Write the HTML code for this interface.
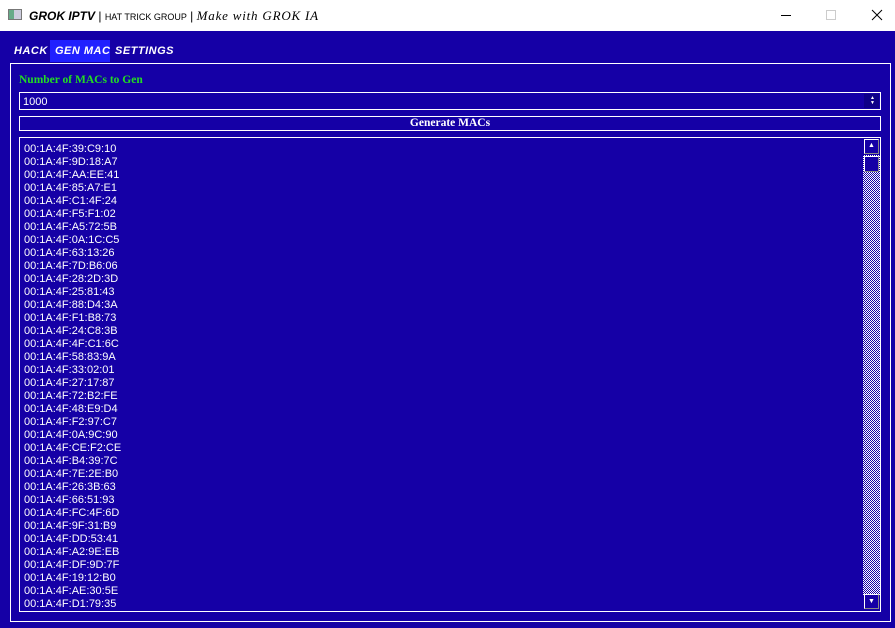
<!DOCTYPE html>
<html><head><meta charset="utf-8"><style>
*{margin:0;padding:0;box-sizing:border-box}
body{width:895px;height:628px;background:#1500a6;position:relative;overflow:hidden;font-family:"Liberation Sans",Tahoma,sans-serif}
.title{position:absolute;left:0;top:0;width:895px;height:31px;background:#fff;color:#000}
.abs{position:absolute}
.tab{position:absolute;top:45px;color:#fff;font:italic bold 11px "Liberation Sans",sans-serif;letter-spacing:0.5px}
.box{position:absolute;border:1px solid #fff}
.list{position:absolute;left:24px;top:143px;color:#fff;font-size:11px;line-height:13px;white-space:pre}
.checker{background-color:#1500a6;background-image:repeating-conic-gradient(#fff 0 25%,#1500a6 0 50%);background-size:2px 2px}
</style></head><body>
<div class="title">
 <div class="abs" style="left:8px;top:9px;width:14px;height:11px;border:1px solid #777;background:linear-gradient(90deg,#6a8 0 40%,#ccd 40%)"></div>
 <div class="abs" style="left:29px;top:8px;font:italic bold 12px 'Liberation Sans',sans-serif;white-space:nowrap">GROK IPTV <span style="font-style:normal;font-weight:normal">|</span> <span style="font:normal 9px 'Liberation Sans',sans-serif">HAT TRICK GROUP</span> <span style="font-style:normal;font-weight:normal">|</span> <span style="font:italic 13px 'Liberation Serif',serif;letter-spacing:0.8px">Make with GROK IA</span></div>
 <div class="abs" style="left:781px;top:15px;width:10px;height:1px;background:#000"></div>
 <div class="abs" style="left:826px;top:10px;width:10px;height:10px;border:1px solid #ccc"></div>
 <svg class="abs" style="left:871px;top:9px" width="12" height="12"><path d="M1 1L11 11M11 1L1 11" stroke="#000" stroke-width="1"/></svg>
</div>
<div class="abs" style="left:50px;top:40px;width:60px;height:22px;background:#2020ff"></div>
<div class="tab" style="left:14px">HACK</div>
<div class="tab" style="left:55px">GEN MAC</div>
<div class="tab" style="left:115px">SETTINGS</div>
<div class="box" style="left:10px;top:63px;width:881px;height:559px"></div>
<div class="abs" style="left:19px;top:74px;color:#22dd22;font:bold 11.5px 'Liberation Serif',serif">Number of MACs to Gen</div>
<div class="box" style="left:19px;top:92px;width:862px;height:18px"></div>
<div class="abs" style="left:23px;top:96px;color:#fff;font-size:11px">1000</div>
<div class="abs" style="left:864px;top:94px;width:15px;height:14px;background:#0e0088"></div>
<div class="abs" style="left:870px;top:96px;color:#fff;font-size:5px;line-height:5px">▲<br>▼</div>
<div class="box" style="left:19px;top:116px;width:862px;height:15px"></div>
<div class="abs" style="left:19px;top:117px;width:862px;text-align:center;color:#fff;font:bold 11.5px 'Liberation Serif',serif">Generate MACs</div>
<div class="box" style="left:19px;top:137px;width:862px;height:475px"></div>
<div class="abs checker" style="left:863px;top:155px;width:17px;height:440px"></div>
<div class="abs" style="left:864px;top:139px;width:15px;height:15px;border:1px solid #fff;border-right-color:#888;border-bottom-color:#888;background:#1500a6;color:#fff;font-size:7px;text-align:center;line-height:12px">▲</div>
<div class="abs" style="left:864px;top:156px;width:15px;height:16px;border:1px solid #fff;border-right-color:#888;border-bottom-color:#888;background:#1500a6"></div>
<div class="abs" style="left:864px;top:594px;width:15px;height:15px;border:1px solid #fff;border-right-color:#888;border-bottom-color:#888;background:#1500a6;color:#fff;font-size:7px;text-align:center;line-height:13px">▼</div>
<div class="list">00:1A:4F:39:C9:10
00:1A:4F:9D:18:A7
00:1A:4F:AA:EE:41
00:1A:4F:85:A7:E1
00:1A:4F:C1:4F:24
00:1A:4F:F5:F1:02
00:1A:4F:A5:72:5B
00:1A:4F:0A:1C:C5
00:1A:4F:63:13:26
00:1A:4F:7D:B6:06
00:1A:4F:28:2D:3D
00:1A:4F:25:81:43
00:1A:4F:88:D4:3A
00:1A:4F:F1:B8:73
00:1A:4F:24:C8:3B
00:1A:4F:4F:C1:6C
00:1A:4F:58:83:9A
00:1A:4F:33:02:01
00:1A:4F:27:17:87
00:1A:4F:72:B2:FE
00:1A:4F:48:E9:D4
00:1A:4F:F2:97:C7
00:1A:4F:0A:9C:90
00:1A:4F:CE:F2:CE
00:1A:4F:B4:39:7C
00:1A:4F:7E:2E:B0
00:1A:4F:26:3B:63
00:1A:4F:66:51:93
00:1A:4F:FC:4F:6D
00:1A:4F:9F:31:B9
00:1A:4F:DD:53:41
00:1A:4F:A2:9E:EB
00:1A:4F:DF:9D:7F
00:1A:4F:19:12:B0
00:1A:4F:AE:30:5E
00:1A:4F:D1:79:35</div>
</body></html>
